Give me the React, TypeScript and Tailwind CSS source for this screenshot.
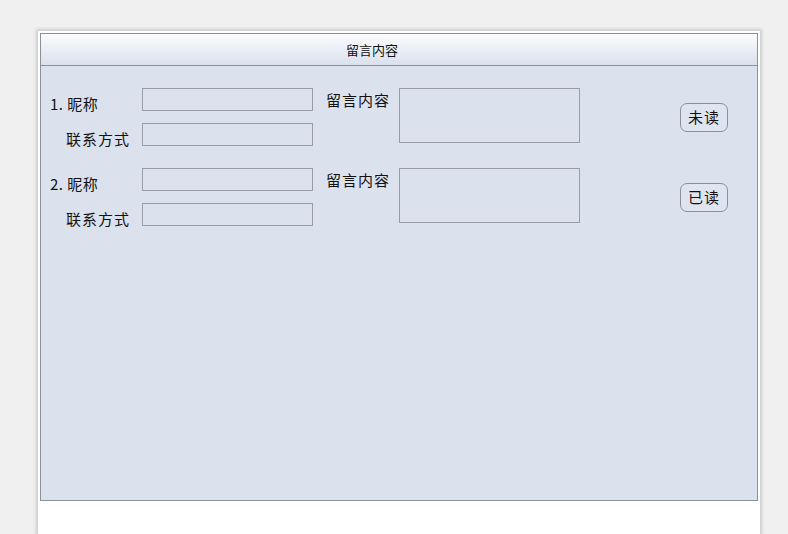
import React from 'react'

const font = { fontFamily: '"Noto Sans CJK SC", "Noto Sans", sans-serif' }

interface MessageRowProps {
  index: number
  status: string
}

function MessageRow({ index, status }: MessageRowProps) {
  return (
    <div className="flex h-[80px] items-start">
      {/* nickname + contact column */}
      <div className="flex flex-col gap-[12px]">
        <div className="flex h-[23px] items-start">
          <div className="h-[23px] w-[92px] pt-[4px] text-[15px] leading-[23px] tracking-[0.5px] text-[#111]">
            {index}. 昵称
          </div>
          <div className="h-[23px] w-[171px] border border-[#999ea6] bg-[#dbe2ee]" />
        </div>
        <div className="flex h-[23px] items-start">
          <div className="h-[23px] w-[92px] pl-[16px] pt-[4px] text-[15px] leading-[23px] tracking-[1px] text-[#111]">
            联系方式
          </div>
          <div className="h-[23px] w-[171px] border border-[#999ea6] bg-[#dbe2ee]" />
        </div>
      </div>

      {/* message content */}
      <div className="ml-[13px] w-[73px] text-[15px] leading-[23px] tracking-[1px] text-[#111]">留言内容</div>
      <div className="h-[55px] w-[181px] border border-[#999ea6] bg-[#dbe2ee]" />

      {/* read status button */}
      <button className="ml-[100px] mt-[15px] flex h-[29px] w-[48px] items-center justify-center rounded-[7px] border border-[#8c9098] bg-[#dfe5f0] text-[15px] tracking-[1px] text-[#111]">
        {status}
      </button>
    </div>
  )
}

export default function App() {
  return (
    <div className="flex h-[534px] w-[788px] flex-col overflow-hidden bg-[#f0f0f0]" style={font}>
      <div className="ml-[38px] mt-[31px] flex w-[722px] flex-1 flex-col bg-white px-[2px] pt-[2px] shadow-[0_0_3px_2px_rgba(0,0,0,0.15)]">
        <div className="flex h-[468px] flex-col border border-[#8a8f98] bg-[#dbe2ee]">
          {/* title bar */}
          <div className="flex h-[32px] items-center border-b border-[#8a8f98] bg-gradient-to-b from-[#fbfcfe] to-[#dae1ed] pl-[305px] text-[13px] text-[#111]">
            留言内容
          </div>

          {/* message list */}
          <div className="flex flex-col pl-[9px] pt-[22px]">
            <MessageRow index={1} status="未读" />
            <MessageRow index={2} status="已读" />
          </div>
        </div>
      </div>
    </div>
  )
}
